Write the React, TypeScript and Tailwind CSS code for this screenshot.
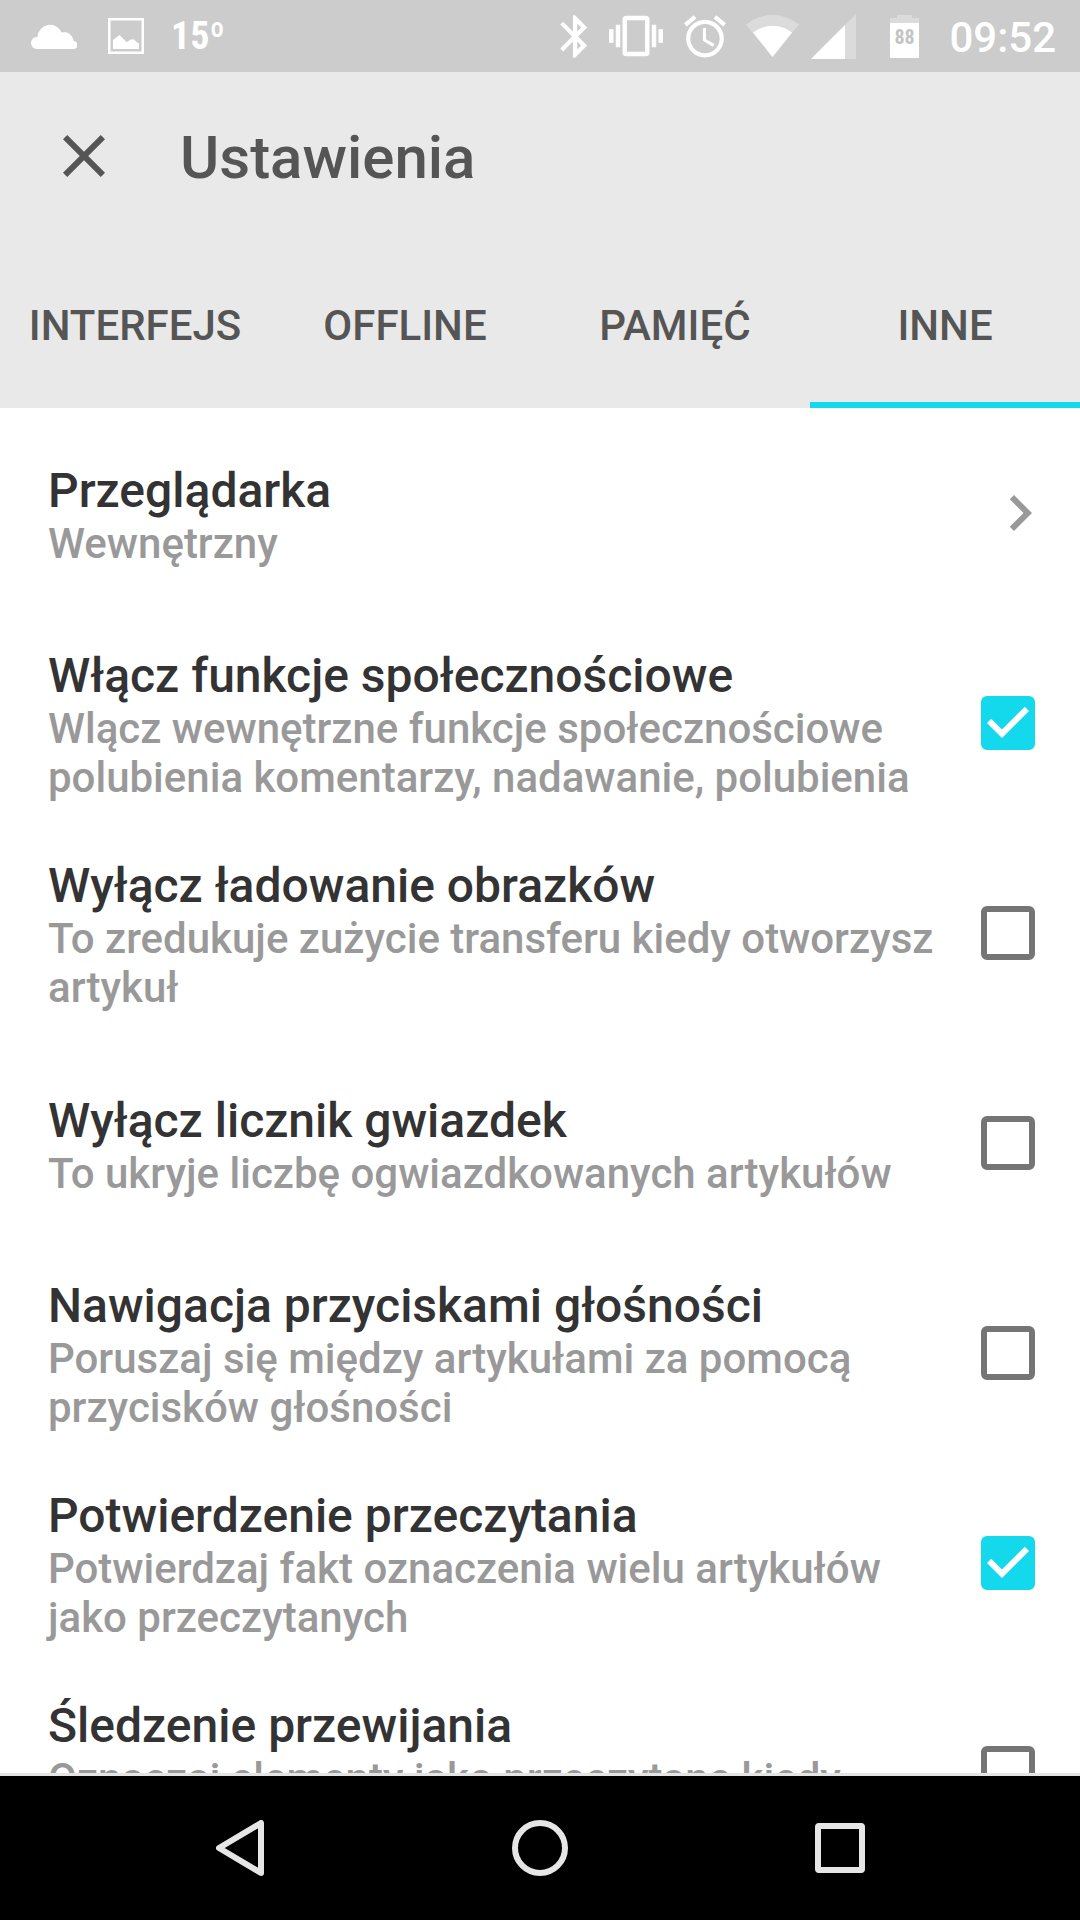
import { useState } from "react";

const tabs = ["INTERFEJS", "OFFLINE", "PAMIĘĆ", "INNE"];

const options = [
  {
    id: "social",
    title: "Włącz funkcje społecznościowe",
    text: "Wlącz wewnętrzne funkcje społecznościowe polubienia komentarzy, nadawanie, polubienia",
    checked: true,
  },
  {
    id: "images",
    title: "Wyłącz ładowanie obrazków",
    text: "To zredukuje zużycie transferu kiedy otworzysz artykuł",
    checked: false,
  },
  {
    id: "stars",
    title: "Wyłącz licznik gwiazdek",
    text: "To ukryje liczbę ogwiazdkowanych artykułów",
    checked: false,
  },
  {
    id: "volume",
    title: "Nawigacja przyciskami głośności",
    text: "Poruszaj się między artykułami za pomocą przycisków głośności",
    checked: false,
  },
  {
    id: "confirm",
    title: "Potwierdzenie przeczytania",
    text: "Potwierdzaj fakt oznaczenia wielu artykułów jako przeczytanych",
    checked: true,
  },
  {
    id: "scroll",
    title: "Śledzenie przewijania",
    text: "Oznaczaj elementy jako przeczytane kiedy przewijasz",
    checked: false,
  },
];

function StatusBar() {
  return (
    <div className="flex h-[72px] shrink-0 items-center justify-between bg-[#cccccc] pl-[31px] pr-6 text-white">
      <div className="flex items-center">
        {/* Cloud */}
        <svg className="h-[25px] w-[46px]" viewBox="0 0 46 25" fill="currentColor">
          <path d="M5.500 25a5.500 6 0 0 1 0-12H6.500A12.500 12.500 0 0 1 30.500 8.500 9.500 9.500 0 0 1 42.500 17 4 4 0 0 1 42.500 25z" />
        </svg>
        {/* Picture */}
        <svg className="ml-[31px] h-9 w-9" viewBox="0 0 36 36" fill="currentColor">
          <path d="M0 0h36v36H0zM2.500 2.500v31h31v-31z" fillRule="evenodd" />
          <path d="M5 31v-9l6.500-5 7 7 1.500-.5c3-3 6-3 8 0l3 2V31z" />
        </svg>
        <span className="ml-[27px] font-['Roboto_Condensed','Roboto',sans-serif] text-[38px] leading-[44px] font-bold">15º</span>
      </div>

      <div className="flex items-center">
        {/* Bluetooth */}
        <svg className="h-[51px] w-[28px]" viewBox="5 0 13 24" fill="currentColor">
          <path d="M17.710 7.710L12 2h-1v7.590L6.410 5 5 6.410 10.590 12 5 17.590 6.410 19 11 14.410V22h1l5.710-5.710-4.300-4.290 4.300-4.290zM13 5.830l1.880 1.880L13 9.590V5.830zm1.880 10.460L13 18.170v-3.760l1.880 1.880z" />
        </svg>
        {/* Vibration */}
        <svg className="ml-[21px] h-[54px] w-[54px]" viewBox="0 0 24 24" fill="currentColor">
          <path d="M0 15h2V9H0v6zm3 2h2V7H3v10zm19-8v6h2V9h-2zm-3 8h2V7h-2v10zM16.500 3h-9C6.670 3 6 3.670 6 4.500v15c0 .83.67 1.500 1.500 1.500h9c.83 0 1.500-.67 1.500-1.500v-15c0-.83-.67-1.500-1.500-1.500zM16 19H8V5h8v14z" />
        </svg>
        {/* Alarm */}
        <svg className="ml-[21px] h-[51px] w-[42px]" viewBox="2 0 20 24" fill="currentColor">
          <path d="M22 5.720l-4.600-3.860-1.290 1.530 4.600 3.860L22 5.720zM7.880 3.390L6.600 1.860 2 5.710l1.290 1.530 4.590-3.850zM12.500 8H11v6l4.750 2.850.75-1.230-4-2.370V8zM12 4c-4.970 0-9 4.030-9 9s4.020 9 9 9c4.970 0 9-4.030 9-9s-4.030-9-9-9zm0 16c-3.870 0-7-3.130-7-7s3.130-7 7-7 7 3.130 7 7-3.130 7-7 7z" />
        </svg>
        {/* Wifi */}
        <svg className="ml-5 h-[42px] w-[53px]" viewBox="0 0 53 42" fill="currentColor">
          <path d="M26.500 42L0 9.500a42 42 0 0 1 53 0z" fillOpacity=".3" />
          <path d="M26.500 42L7 17.500a32 32 0 0 1 39 0z" />
        </svg>
        {/* Signal */}
        <svg className="ml-3 h-[45px] w-[45px]" viewBox="0 0 45 45" fill="currentColor">
          <path d="M0 45L45 0v45z" fillOpacity=".3" />
          <path d="M0 45l34-34v34z" />
        </svg>
        {/* Battery */}
        <svg className="ml-[34px] h-[43px] w-[29px]" viewBox="0 0 29 43" fill="currentColor">
          <path d="M7 0h15v3h7v5H0V3h7z" fillOpacity=".3" />
          <path d="M0 8h29v35H0z" />
          <text
            x="14.500"
            y="29"
            textAnchor="middle"
            className="fill-[#c4c4c4] font-['Roboto_Condensed','Roboto',sans-serif] text-xl font-bold"
          >
            88
          </text>
        </svg>
        <span className="ml-[30px] pt-[3px] text-[42px] leading-[50px] font-medium">09:52</span>
      </div>
    </div>
  );
}

export default function App() {
  const [active, setActive] = useState("INNE");

  return (
    <div className="flex h-screen flex-col overflow-hidden bg-white font-['Roboto',sans-serif]">
      <StatusBar />

      <header className="shrink-0 bg-[#e9e9e9] text-[#555555]">
        <div className="flex h-[168px] items-center px-12">
          <button type="button" aria-label="Zamknij">
            <svg className="h-[72px] w-[72px]" viewBox="0 0 24 24" fill="currentColor">
              <path d="M19 6.410L17.590 5 12 10.590 6.410 5 5 6.410 10.590 12 5 17.590 6.410 19 12 13.410 17.590 19 19 17.590 13.410 12z" />
            </svg>
          </button>
          <h1 className="ml-[60px] pt-1 text-6xl font-medium">Ustawienia</h1>
        </div>

        {/* Tabs */}
        <nav className="grid h-[168px] grid-cols-4">
          {tabs.map((tab) => (
            <button
              key={tab}
              type="button"
              onClick={() => setActive(tab)}
              className={`border-b-6 pt-2 text-[42px] font-medium ${
                active === tab ? "border-[#14d8ec]" : "border-transparent"
              }`}
            >
              {tab}
            </button>
          ))}
        </nav>
      </header>

      {/* Settings list */}
      <main className="min-h-0 flex-1 overflow-hidden border-b-3 border-[#e4e4e4]">
        <button type="button" className="flex h-[210px] w-full items-center justify-between pl-12 pr-6 text-left">
          <span className="block pt-1 font-medium">
            <span className="block text-5xl leading-[56px] text-[#333333]">Przeglądarka</span>
            <span className="block text-[42px] leading-[49px] text-[#999999]">Wewnętrzny</span>
          </span>
          <svg className="h-[72px] w-[72px] shrink-0 text-[#999999]" viewBox="0 0 24 24" fill="currentColor">
            <path d="M10 6L8.590 7.410 13.170 12l-4.580 4.590L10 18l6-6z" />
          </svg>
        </button>

        {options.map((option) => (
          <label key={option.id} htmlFor={option.id} className="flex h-[210px] items-center pl-12 pr-[45px]">
            <span className="block flex-1 pr-[45px] pt-1 font-medium">
              <span className="block text-5xl leading-[56px] text-[#333333]">{option.title}</span>
              <span className="block text-[42px] leading-[49px] text-[#999999]">{option.text}</span>
            </span>
            <span className="grid shrink-0">
              <input
                id={option.id}
                type="checkbox"
                defaultChecked={option.checked}
                className="peer col-start-1 row-start-1 h-[54px] w-[54px] appearance-none rounded-md border-6 border-[#757575] checked:border-[#14d8ec] checked:bg-[#14d8ec]"
              />
              <svg
                className="pointer-events-none invisible col-start-1 row-start-1 h-[54px] w-[54px] text-white peer-checked:visible"
                viewBox="3 3 18 18"
                fill="currentColor"
              >
                <path d="M10 17l-5-5 1.410-1.410L10 14.170l7.590-7.590L19 8z" />
              </svg>
            </span>
          </label>
        ))}
      </main>

      {/* Navigation bar */}
      <footer className="grid h-36 shrink-0 grid-cols-3 bg-black px-[90px] text-[#e6e6e6]">
        <button type="button" aria-label="Wstecz" className="flex items-center justify-center">
          <svg className="h-14 w-12" viewBox="0 0 48 56" fill="none" stroke="currentColor" strokeWidth="6" strokeLinejoin="round">
            <path d="M45 3v50L3 28z" />
          </svg>
        </button>
        <button type="button" aria-label="Ekran główny" className="flex items-center justify-center">
          <svg className="h-14 w-14" viewBox="0 0 56 56" fill="none" stroke="currentColor" strokeWidth="6">
            <circle cx="28" cy="28" r="25" />
          </svg>
        </button>
        <button type="button" aria-label="Ostatnie" className="flex items-center justify-center">
          <svg className="h-[50px] w-[50px]" viewBox="0 0 50 50" fill="none" stroke="currentColor" strokeWidth="6">
            <rect x="3" y="3" width="44" height="44" rx="1" />
          </svg>
        </button>
      </footer>
    </div>
  );
}
